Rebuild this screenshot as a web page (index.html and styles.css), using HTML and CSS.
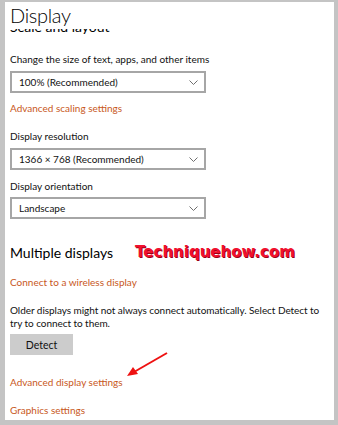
FILE: index.html
```html
<!DOCTYPE html>
<html>
<head>
    <title>Display settings</title>
    <link rel="stylesheet" href="styles.css">
</head>
<body>
    <div class="panel">
        <div class="page-title">Display</div>
        <div class="clip"><div class="section-title">Scale and layout</div></div>

        <div class="label label-first">Change the size of text, apps, and other items</div>
        <div class="select">100% (Recommended)
            <svg class="chevron" width="9" height="5" viewBox="0 0 9 5"><polyline points="0.5,0.5 4.5,4.5 8.5,0.5" fill="none" stroke="#6f6f6f"/></svg>
        </div>
        <div class="link link-scaling">Advanced scaling settings</div>

        <div class="label label-res">Display resolution</div>
        <div class="select">1366 × 768 (Recommended)
            <svg class="chevron" width="9" height="5" viewBox="0 0 9 5"><polyline points="0.5,0.5 4.5,4.5 8.5,0.5" fill="none" stroke="#6f6f6f"/></svg>
        </div>

        <div class="label label-orient">Display orientation</div>
        <div class="select select-orient">Landscape
            <svg class="chevron" width="9" height="5" viewBox="0 0 9 5"><polyline points="0.5,0.5 4.5,4.5 8.5,0.5" fill="none" stroke="#6f6f6f"/></svg>
        </div>

        <div class="multi-row">
            <div class="section-title">Multiple displays</div>
            <div class="watermark">Techniquehow.com</div>
        </div>
        <div class="link link-connect">Connect to a wireless display</div>

        <p class="note">Older displays might not always connect automatically. Select Detect to try to connect to them.</p>
        <button class="detect-btn">Detect</button>

        <div class="link link-advanced">Advanced display settings</div>
        <div class="link link-graphics">Graphics settings</div>

        <svg class="arrow" width="50" height="30" viewBox="0 0 50 30">
            <line x1="45" y1="2" x2="12" y2="21" stroke="#ee1111" stroke-width="2"/>
            <polygon points="5,25 11,16 16,23" fill="#ee1111"/>
        </svg>
    </div>
</body>
</html>
```

FILE: styles.css
```css
:root {
    --frame: #c4c4c4;
    --accent: #c8581c;
    --text: #111;
}

body {
    margin: 0;
    width: 338px;
    height: 425px;
    box-sizing: border-box;
    padding: 2px 4px 5px 5px;
    background: var(--frame);
    font-family: Lato, 'Open Sans', sans-serif;
    font-size: 10px;
    color: var(--text);
}

.panel {
    position: relative;
    height: 100%;
    background: white;
    padding-left: 5px;
    overflow: hidden;
}

.page-title {
    height: 27px;
    line-height: 26px;
    font-size: 20px;
    font-weight: 300;
    letter-spacing: -0.3px;
    color: #000;
}

/* section heading scrolled half under the page title */
.clip {
    height: 7px;
    overflow: hidden;
}

.section-title {
    font-size: 14px;
    line-height: 22px;
    color: #000;
}

.clip .section-title {
    line-height: 16px;
    margin-top: -10px;
}

.label,
.link {
    line-height: 16px;
    white-space: nowrap;
}

.link {
    color: var(--accent);
}

.label-first { margin-top: 15px; }
.link-scaling { margin-top: 7px; }
.label-res { margin-top: 12px; }
.label-orient { margin-top: 8px; }

.select {
    display: flex;
    align-items: center;
    justify-content: space-between;
    box-sizing: border-box;
    width: 196px;
    height: 22px;
    margin-top: 4px;
    padding: 0 6px 0 7px;
    border: 2px solid #a6a6a6;
}

.select-orient { margin-top: 3px; }

.chevron {
    display: block;
}

.multi-row {
    display: flex;
    align-items: center;
    gap: 22px;
    margin-top: 23px;
}

.watermark {
    font-family: 'DejaVu Sans', sans-serif;
    font-weight: bold;
    font-size: 15px;
    color: #f0102e;
    text-shadow: 1px 1px 0 #9a0016;
    margin-top: -2px;
}

.link-connect { margin-top: 10px; }

.note {
    width: 318px;
    margin: 14px 0 0;
    line-height: 12.5px;
    letter-spacing: -0.05px;
}

.detect-btn {
    display: block;
    width: 63px;
    height: 21px;
    margin-top: 5px;
    border: none;
    background: #cccccc;
    font-family: inherit;
    font-size: 10.5px;
    color: var(--text);
}

.link-advanced { margin-top: 19px; }
.link-graphics { margin-top: 12px; }

.arrow {
    position: absolute;
    left: 117px;
    top: 349px;
}
```
